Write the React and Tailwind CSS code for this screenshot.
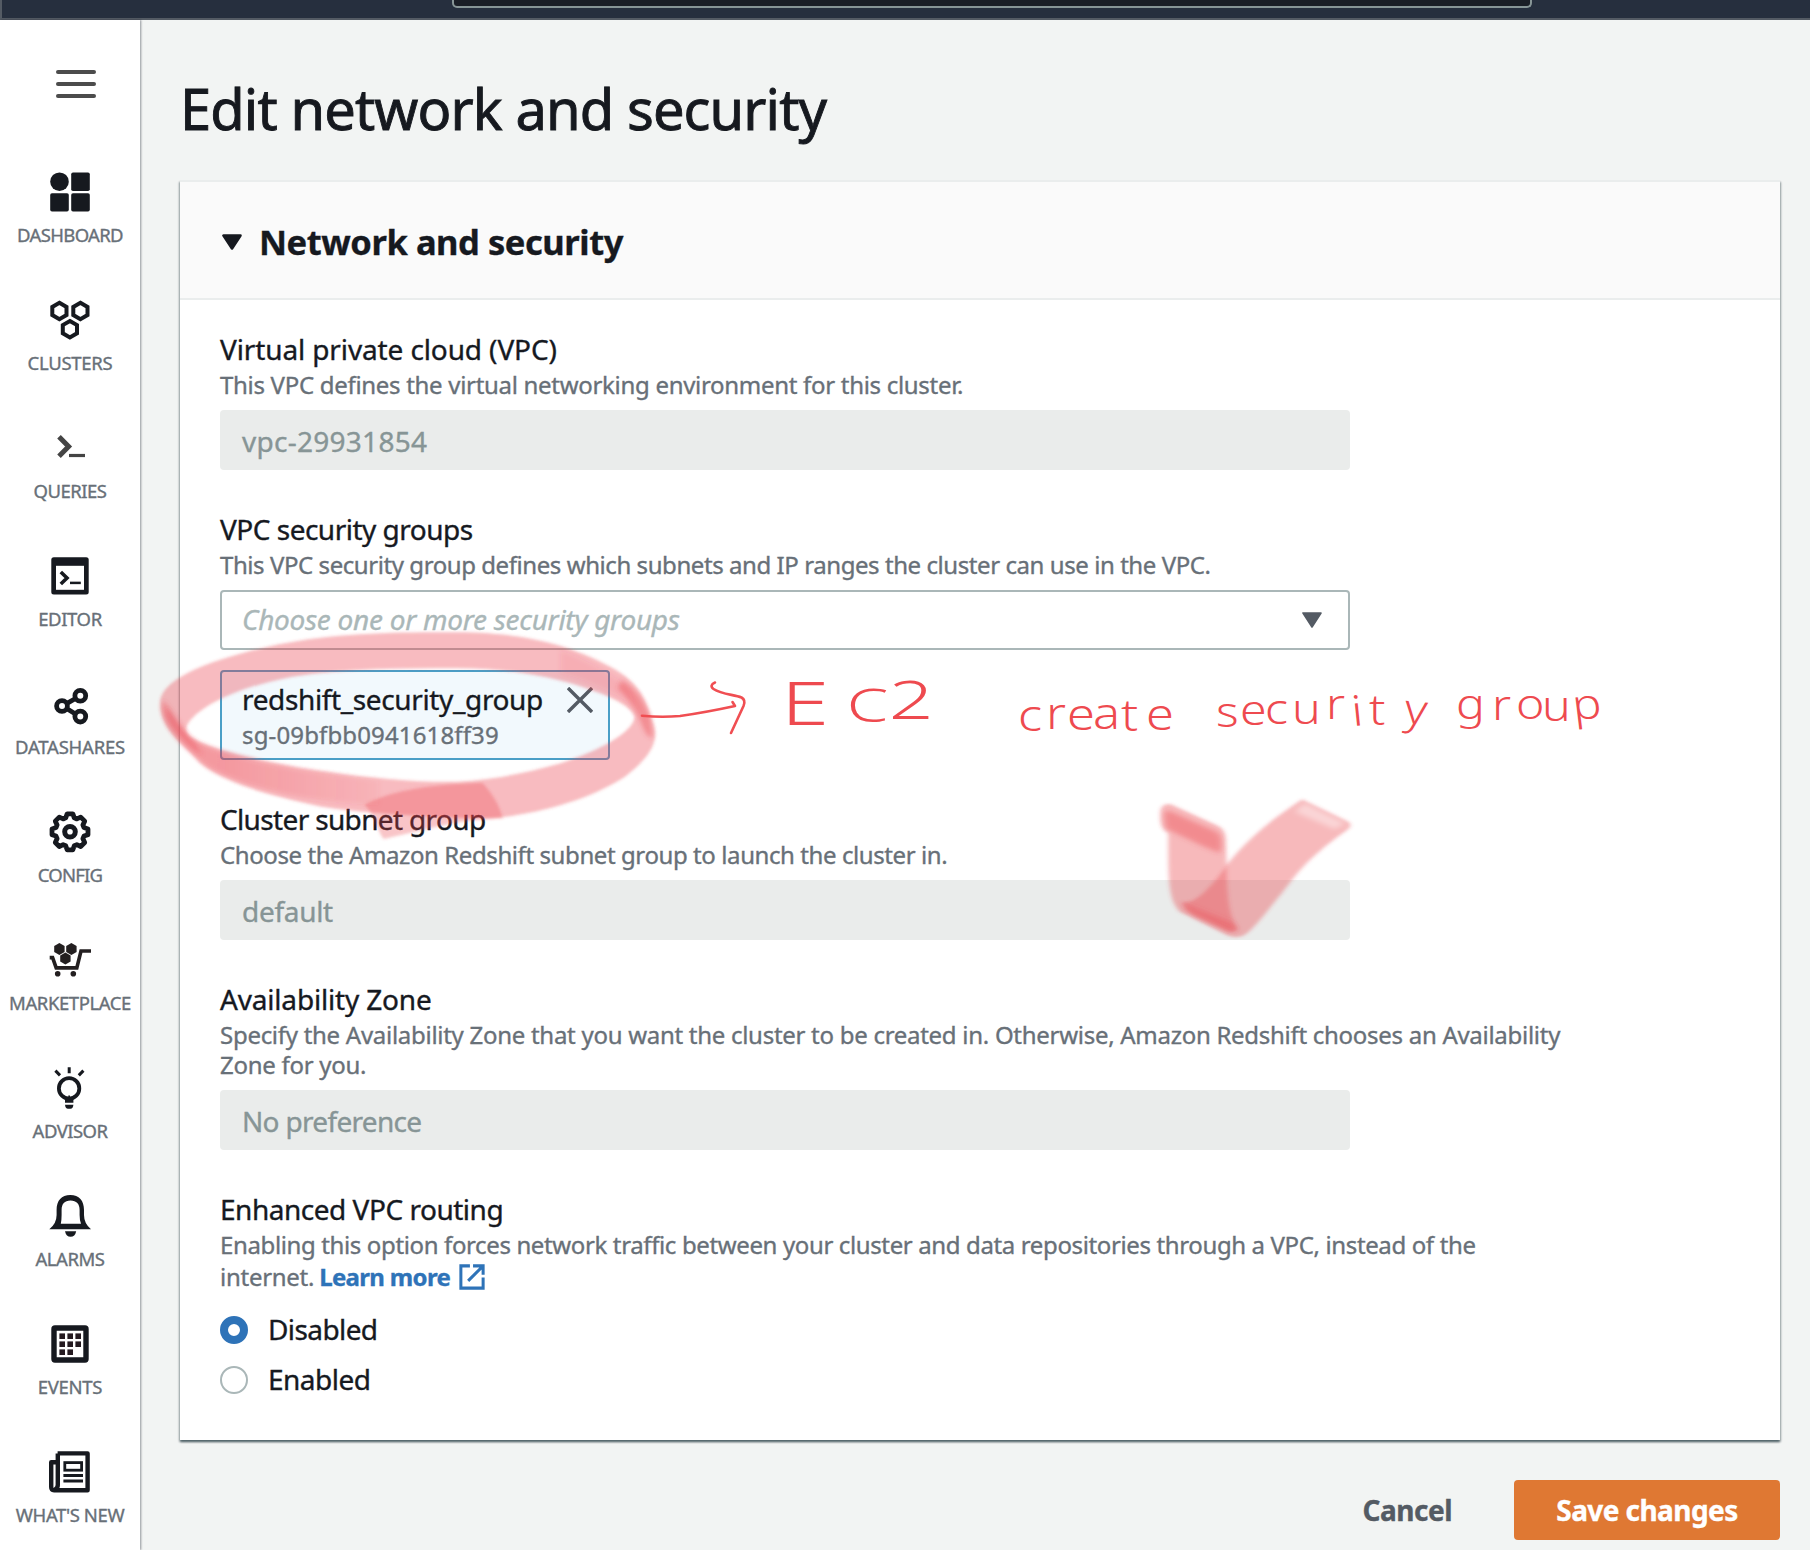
import React from "react";

const INK = "#16191f";

function hexPoints(cx, cy, r) {
  return [0, 1, 2, 3, 4, 5]
    .map((i) => {
      const a = (Math.PI / 3) * i - Math.PI / 2;
      return `${(cx + r * Math.cos(a)).toFixed(2)},${(cy + r * Math.sin(a)).toFixed(2)}`;
    })
    .join(" ");
}

function gearPoints(cx, cy) {
  const pts = [];
  for (let i = 0; i < 8; i++) {
    const base = i * 45;
    [[-9, 18.2], [9, 18.2], [17, 14.6], [28, 14.6]].forEach(([d, r]) => {
      const a = ((base + d) * Math.PI) / 180;
      pts.push(`${(cx + r * Math.cos(a)).toFixed(2)},${(cy + r * Math.sin(a)).toFixed(2)}`);
    });
  }
  return pts.join(" ");
}

function Icon({ children }) {
  return (
    <svg className="block h-10 w-10 overflow-visible" viewBox="0 0 40 40" fill="none">
      {children}
    </svg>
  );
}

const NAV = [
  {
    label: "DASHBOARD",
    cls: "tracking-[-0.66px]",
    icon: (
      <g fill={INK}>
        <circle cx="9.5" cy="9.7" r="9.3" />
        <rect x="21.2" y="0.4" width="18.6" height="18.6" rx="1.8" />
        <rect x="0.2" y="21.2" width="18.6" height="18.4" rx="1.8" />
        <rect x="21.2" y="21.2" width="18.6" height="18.4" rx="1.8" />
      </g>
    ),
  },
  {
    label: "CLUSTERS",
    cls: "tracking-[-0.28px]",
    icon: (
      <g stroke={INK} strokeWidth="4">
        <polygon points={hexPoints(9.4, 11, 8.2)} />
        <polygon points={hexPoints(30.4, 11, 8.2)} />
        <polygon points={hexPoints(19.9, 29.2, 8.2)} />
      </g>
    ),
  },
  {
    label: "QUERIES",
    cls: "tracking-[-0.5px]",
    icon: (
      <g stroke="#444444">
        <path d="M9 8.8 18.6 18.6 9 28.2" strokeWidth="5" />
        <path d="M19 27.5H35" strokeWidth="3.2" />
      </g>
    ),
  },
  {
    label: "EDITOR",
    cls: "tracking-[-0.4px]",
    icon: (
      <g>
        <rect x="1.3" y="1.3" width="37.4" height="37.2" rx="2.5" fill={INK} />
        <rect x="6" y="9.8" width="28" height="24" fill="#fff" />
        <path d="M10.8 16 17 22 10.8 28" stroke={INK} strokeWidth="3.6" />
        <path d="M20 26.9H30.8" stroke={INK} strokeWidth="2.5" />
      </g>
    ),
  },
  {
    label: "DATASHARES",
    cls: "tracking-[-0.22px]",
    icon: (
      <g stroke={INK} strokeWidth="4.8">
        <path d="M17 19.3 25.5 14.5M17 24.7 25.5 30" />
        <circle cx="12" cy="22" r="5.4" />
        <circle cx="30.3" cy="11.8" r="5.4" />
        <circle cx="30.3" cy="32.6" r="5.4" />
      </g>
    ),
  },
  {
    label: "CONFIG",
    cls: "tracking-[-0.8px]",
    icon: (
      <g stroke={INK}>
        <polygon points={gearPoints(20, 19.8)} strokeWidth="4.8" strokeLinejoin="round" />
        <circle cx="20" cy="19.8" r="5.3" strokeWidth="5" />
      </g>
    ),
  },
  {
    label: "MARKETPLACE",
    cls: "tracking-[-0.42px]",
    icon: (
      <g fill="#231f20">
        <polygon points={hexPoints(9.4, 9, 6)} />
        <polygon points={hexPoints(21.4, 9, 6)} />
        <polygon points={hexPoints(15.4, 18.4, 6)} />
        <path d="M-0.3 17.6H2.6L6.2 27.9H26.8L31 11H41" fill="none" stroke="#231f20" strokeWidth="3.6" />
        <circle cx="7.7" cy="33.8" r="2.8" />
        <circle cx="23.3" cy="33.8" r="2.8" />
      </g>
    ),
  },
  {
    label: "ADVISOR",
    cls: "tracking-[-0.55px]",
    icon: (
      <g stroke={INK} strokeWidth="3">
        <path d="M19.2 -0.8V5.2M5.4 2.6 10 7.4M33.4 2.6 28.8 7.4" />
        <circle cx="19.1" cy="20.4" r="10.2" strokeWidth="3.8" />
        <path d="M15 29.5H18.3V27.5H20V29.5H23.4V34.8H15Z" fill={INK} stroke="none" />
        <path d="M15 36.8H23.4Q23 40.8 20.5 40.8H18Q15.4 40.8 15 36.8Z" fill={INK} stroke="none" />
      </g>
    ),
  },
  {
    label: "ALARMS",
    cls: "tracking-[-0.45px]",
    icon: (
      <g fill={INK}>
        <path
          fillRule="evenodd"
          d="M-0.7 33.2Q6.6 27.5 6.6 19V14C6.6 4.5 11.5 -1 20.3 -1S34 4.5 34 14V19Q34 27.5 41 33.2ZM10.8 27.8H31Q29.6 24 29.6 19V14C29.6 8 26.5 4.6 20.5 4.6S11.6 8 11.6 14V19Q11.6 24 10.8 27.8Z"
        />
        <path d="M15 35.2H26.2Q25 40.8 20.6 40.8T15 35.2Z" />
      </g>
    ),
  },
  {
    label: "EVENTS",
    cls: "tracking-[-0.3px]",
    icon: (
      <g>
        <rect x="4" y="4" width="32" height="32" rx="1" stroke={INK} strokeWidth="5.4" />
        {[0, 1, 2, 3, 4, 5, 6, 7].map((i) => (
          <rect
            key={i}
            x={9.4 + (i % 3) * 8}
            y={9.4 + Math.floor(i / 3) * 8}
            width="5.6"
            height="5.6"
            fill="#241a20"
          />
        ))}
      </g>
    ),
  },
  {
    label: "WHAT'S NEW",
    cls: "tracking-[-0.4px]",
    icon: (
      <g stroke={INK}>
        <path d="M7.6 1.4H37.6V38.2H4Q1.2 38.2 1.2 35V10.2H6" strokeWidth="4.4" strokeLinejoin="round" />
        <path d="M7.8 1.4V33Q7.8 36 5 37.6" strokeWidth="4.4" />
        <rect x="14.8" y="10.6" width="16.8" height="7.6" strokeWidth="2.8" />
        <path d="M13.4 23.4H33M13.4 29H33" strokeWidth="3" />
      </g>
    ),
  },
];

function Label({ children, cls }) {
  return <div className={`text-[28px] leading-9 whitespace-nowrap text-[#16191f] ${cls}`}>{children}</div>;
}

function Hint({ children, cls }) {
  return <p className={`mt-[3px] text-2xl leading-[30px] whitespace-nowrap text-[#687078] ${cls}`}>{children}</p>;
}

function DisabledInput({ children, cls }) {
  return (
    <div
      className={`mt-2.5 flex h-[60px] w-[1130px] items-center rounded-[4px] bg-[#eaeceb] px-[22px] pt-0.5 text-[28px] text-[#879596] ${cls}`}
    >
      {children}
    </div>
  );
}

function Radio({ checked, children, cls }) {
  return (
    <div className="flex h-9 items-center gap-5">
      <span
        className={
          checked
            ? "size-7 rounded-full border-[8px] border-[#2e73b8] bg-white"
            : "size-7 rounded-full border-2 border-[#aab7b8] bg-white"
        }
      />
      <span className={`pb-0.5 text-[28px] leading-9 text-[#16191f] ${cls}`}>{children}</span>
    </div>
  );
}

function Sidebar() {
  return (
    <nav className="relative z-10 flex w-[140px] shrink-0 flex-col items-center bg-white pt-[50px] shadow-[1px_0_2px_0_rgba(0,7,22,0.4)]">
      <div className="ml-3 flex w-10 flex-col gap-2">
        <span className="h-1 rounded-full bg-[#4c4c4c]" />
        <span className="h-1 rounded-full bg-[#4c4c4c]" />
        <span className="h-1 rounded-full bg-[#4c4c4c]" />
      </div>
      <ul className="mt-[74px] flex flex-col gap-[53px]">
        {NAV.map((n) => (
          <li key={n.label} className="flex w-[140px] flex-col items-center">
            <Icon>{n.icon}</Icon>
            <span className={`mt-[11px] text-[18.5px] leading-6 whitespace-nowrap text-[#687078] ${n.cls}`}>
              {n.label}
            </span>
          </li>
        ))}
      </ul>
    </nav>
  );
}

/* Hand-made highlighter and pen marks laid over the form. */
function Annotations() {
  return (
    <svg
      className="pointer-events-none absolute top-0 left-0 z-20 h-[1550px] w-[1810px]"
      viewBox="0 0 1810 1550"
      fill="none"
    >
      <defs>
        <filter id="soft" x="-10%" y="-10%" width="120%" height="120%">
          <feGaussianBlur stdDeviation="5" />
        </filter>
        <filter id="softer" x="-40%" y="-40%" width="180%" height="180%">
          <feGaussianBlur stdDeviation="8" />
        </filter>
        <linearGradient id="fade" gradientUnits="userSpaceOnUse" x1="40" y1="0" x2="640" y2="0">
          <stop offset="0" stopColor="#ea3f48" stopOpacity="0.3" />
          <stop offset="0.25" stopColor="#ea3f48" stopOpacity="0.28" />
          <stop offset="1" stopColor="#ea3f48" stopOpacity="0.06" />
        </linearGradient>
      </defs>
      <g transform="translate(150 600) scale(0.35714 0.33333)" fill="#ea3f48">
        <path
          filter="url(#soft)"
          fillOpacity="0.35"
          fillRule="evenodd"
          d="M28 310C28 240 150 185 330 140C500 98 700 95 860 97C1050 97 1180 140 1270 190C1370 240 1390 300 1408 365C1432 430 1390 480 1330 530C1230 600 1090 640 960 655C820 655 600 640 480 620C330 585 210 550 140 490C90 430 28 390 28 310ZM103 378C130 320 250 260 400 230C560 205 700 205 860 205C1000 205 1130 230 1220 265C1290 290 1350 320 1357 352C1350 400 1260 450 1150 490C1050 520 960 540 860 545C760 548 620 535 500 515C380 500 220 460 150 430C110 410 98 400 103 378Z"
        />
        <path
          filter="url(#soft)"
          fillOpacity="0.3"
          d="M600 615C660 580 740 562 850 553L930 548C960 580 980 620 988 655C880 655 800 682 655 717C638 700 630 640 600 615Z"
        />
        <path
          filter="url(#softer)"
          fill="url(#fade)"
          d="M38 300C62 330 85 380 112 412C150 440 200 455 260 472C380 505 480 520 640 540L640 615C420 605 270 565 160 500C90 430 40 390 32 320Z"
        />
        <path
          filter="url(#softer)"
          fillOpacity="0.34"
          d="M45 320C65 350 95 395 130 435L145 465C105 440 65 390 45 345Z"
        />
        <path
          filter="url(#softer)"
          fillOpacity="0.1"
          d="M1150 150C1220 180 1280 215 1340 260L1360 320C1300 280 1230 240 1150 220Z"
        />
        <path
          filter="url(#softer)"
          fillOpacity="0.38"
          d="M1320 240C1365 270 1380 300 1400 350L1408 410C1392 420 1380 380 1365 345C1350 315 1335 290 1310 265Z"
        />
      </g>
      <g transform="translate(1000 560) scale(0.40833 0.33333)" fill="#ea3f48">
        <path
          filter="url(#soft)"
          fillOpacity="0.37"
          d="M393 760C392 735 408 725 428 738L530 795C550 805 553 825 553 845L555 915C610 830 670 775 740 718L850 783C862 792 860 800 850 810C740 905 720 955 690 1000C650 1060 625 1100 605 1120C590 1135 570 1135 550 1122L440 1055C412 1020 412 960 412 820C395 805 392 790 393 760Z"
        />
        <path
          filter="url(#softer)"
          fillOpacity="0.38"
          d="M402 760C408 748 415 752 428 760L530 815C543 825 545 845 540 878C520 875 440 825 406 805Z"
        />
        <path
          filter="url(#soft)"
          fillOpacity="0.32"
          d="M555 918C520 975 495 1010 465 1025L445 1028C455 1050 465 1060 480 1070L560 1115C575 1118 580 1115 582 1105C560 1070 556 1000 555 918Z"
        />
        <path filter="url(#softer)" fillOpacity="0.32" d="M450 1030L572 1090L580 1110L560 1112L455 1050Z" />
        <path filter="url(#softer)" fill="#ffffff" fillOpacity="0.4" d="M745 730L845 790L820 808L722 755Z" />
      </g>
      <g stroke="#f04e52" strokeWidth="2.6" strokeLinecap="round" strokeLinejoin="round">
        <path d="M642 715.7Q661 717.5 680 716Q705 712.5 735 706L732.5 702" />
        <path d="M715 682.5C711 684 710.5 687 713.5 689C722 694.5 734 694.5 741.5 697.5Q746 700 743.5 706L731 733" />
      </g>
      <g className="font-['Noto_Sans','Open_Sans',sans-serif] font-light" fill="#ee4a4f">
        <text transform="scale(1.45 1)" x="538.6 584 613" y="725 722 719" fontSize="60">
          E<tspan fontSize="46">C</tspan>
          <tspan fontSize="54">2</tspan>
        </text>
        <text
          transform="scale(1.15 1)"
          x="885.2 909.6 927.8 950.4 974.8 996.5"
          y="731 729 730 729 731 730"
          fontSize="44"
        >
          create
        </text>
        <text
          transform="scale(1.15 1)"
          x="1057.4 1078.3 1100 1123.5 1153 1176.5 1190.4 1220"
          y="727 725 724 724 719 726 725 723"
          rotate="0 0 0 0 0 -5 0 6"
          fontSize="42"
        >
          security
        </text>
        <text
          transform="scale(1.15 1)"
          x="1266.1 1297.4 1318.3 1340.9 1368.7"
          y="719 720 719 721 720"
          rotate="0 0 0 0 -6"
          fontSize="42"
        >
          group
        </text>
      </g>
    </svg>
  );
}

export default function App() {
  return (
    <div className="relative flex h-[1550px] w-[1810px] flex-col overflow-hidden bg-[#f2f3f3] font-['Noto_Sans','Open_Sans',sans-serif] text-[#16191f] [-webkit-text-stroke-width:0.35px]">
      <header className="flex h-5 shrink-0 border-b-2 border-l-2 border-[#545b64] bg-[#262f3e]">
        <div className="ml-[450px] h-2 w-[1080px] rounded-b-[5px] border-2 border-t-0 border-[#879596] bg-[#1a1e26]" />
      </header>
      <div className="flex min-h-0 flex-1">
        <Sidebar />
        <main className="flex flex-1 flex-col bg-[#f2f4f3] pt-[52px] pr-[30px] pl-10">
          <h1 className="pt-px text-[56px] leading-[71px] tracking-[-0.87px] whitespace-nowrap [-webkit-text-stroke-width:0.9px]">
            Edit network and security
          </h1>
          <section className="mt-9 border-t-2 border-[#eaeded] bg-white shadow-[0_2px_2px_0_rgba(0,28,36,0.35),1px_2px_2px_0_rgba(0,28,36,0.28),-1px_2px_2px_0_rgba(0,28,36,0.28)]">
            <div className="flex h-[118px] items-center border-b-2 border-[#eaeded] bg-[#fafafa] pl-[42px]">
              <svg className="mt-1 h-4 w-5" viewBox="0 0 20 16">
                <path d="M1.5 1.5H18.5L10 14.5Z" fill={INK} stroke={INK} strokeWidth="2.6" strokeLinejoin="round" />
              </svg>
              <h2 className="ml-[17px] pt-[3px] text-[34.5px] font-bold tracking-[-0.45px] whitespace-nowrap">
                Network and security
              </h2>
            </div>
            <div className="flex flex-col gap-[41px] px-10 pt-[31px] pb-[42px]">
              <div>
                <Label cls="tracking-[-0.12px]">Virtual private cloud (VPC)</Label>
                <Hint cls="tracking-[-0.3px]">
                  This VPC defines the virtual networking environment for this cluster.
                </Hint>
                <DisabledInput cls="tracking-[0.27px]">vpc-29931854</DisabledInput>
              </div>
              <div>
                <Label cls="tracking-[-0.5px]">VPC security groups</Label>
                <Hint cls="tracking-[-0.43px]">
                  This VPC security group defines which subnets and IP ranges the cluster can use in the VPC.
                </Hint>
                <div className="mt-2.5 flex h-[60px] w-[1130px] items-center justify-between rounded-[4px] border-2 border-[#aab7b8] bg-white pr-[26px] pl-5">
                  <span className="pb-0.5 text-[28px] tracking-[-0.28px] text-[#aab7b8] italic">
                    Choose one or more security groups
                  </span>
                  <svg className="h-4 w-5" viewBox="0 0 20 16">
                    <path d="M1 1H19L10 15Z" fill="#545b64" stroke="#545b64" strokeWidth="1.6" strokeLinejoin="round" />
                  </svg>
                </div>
                <div className="mt-5 flex h-[90px] w-[390px] justify-between rounded-[4px] border-2 border-[#4a9fc7] bg-[#f2f9fd] pt-[9px] pr-[15px] pl-5">
                  <div className="whitespace-nowrap">
                    <div className="text-[28px] leading-9 tracking-[-0.37px]">redshift_security_group</div>
                    <div className="text-2xl leading-[35px] tracking-[0.14px] text-[#687078]">sg-09bfbb0941618ff39</div>
                  </div>
                  <svg className="mt-[6px] size-[26px]" viewBox="0 0 26 26">
                    <path d="M1 1 25 25M25 1 1 25" stroke="#545b64" strokeWidth="3.4" />
                  </svg>
                </div>
              </div>
              <div>
                <Label cls="tracking-[-0.65px]">Cluster subnet group</Label>
                <Hint cls="tracking-[-0.41px]">Choose the Amazon Redshift subnet group to launch the cluster in.</Hint>
                <DisabledInput cls="tracking-[-0.3px]">default</DisabledInput>
              </div>
              <div>
                <Label cls="tracking-[-0.18px]">Availability Zone</Label>
                <Hint cls="tracking-[-0.28px]">
                  Specify the Availability Zone that you want the cluster to be created in. Otherwise, Amazon Redshift
                  chooses an Availability
                  <br />
                  Zone for you.
                </Hint>
                <DisabledInput cls="tracking-[-0.68px]">No preference</DisabledInput>
              </div>
              <div>
                <Label cls="tracking-[-0.48px]">Enhanced VPC routing</Label>
                <Hint cls="tracking-[-0.37px]">
                  Enabling this option forces network traffic between your cluster and data repositories through a VPC,
                  instead of the
                </Hint>
                <div className="flex h-[34px] items-center text-2xl leading-[34px] text-[#687078]">
                  <span className="tracking-[-0.27px]">internet.</span>
                  <a className="ml-[5px] flex items-center gap-[9px] font-bold tracking-[-0.67px] text-[#2e73b8]">
                    Learn more
                    <svg className="size-[26px]" viewBox="0 0 25 25" fill="none" stroke="#2e73b8" strokeWidth="2.9">
                      <path d="M10.5 1.8H1.8V23.2H23.2V13" />
                      <path d="M13.5 1.8H23.2V10.3M22.5 2.5 8.8 16.2" />
                    </svg>
                  </a>
                </div>
                <div className="mt-[18px] flex flex-col gap-3.5">
                  <Radio checked cls="tracking-[-0.6px]">
                    Disabled
                  </Radio>
                  <Radio cls="tracking-[-0.5px]">Enabled</Radio>
                </div>
              </div>
            </div>
          </section>
          <div className="mt-10 flex items-center justify-end gap-[62px] text-[28px] font-bold">
            <button className="tracking-[-0.5px] text-[#545b64]">Cancel</button>
            <button className="h-[60px] w-[266px] rounded-[4px] bg-[#df7833] tracking-[-0.57px] text-white">
              Save changes
            </button>
          </div>
        </main>
      </div>
      <Annotations />
    </div>
  );
}
